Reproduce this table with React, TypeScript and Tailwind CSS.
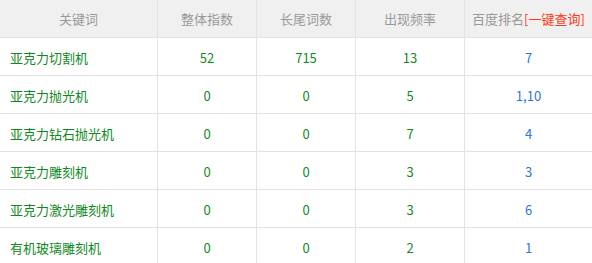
import React from "react";

const rows = [
  ["亚克力切割机", "52", "715", "13", "7"],
  ["亚克力抛光机", "0", "0", "5", "1,10"],
  ["亚克力钻石抛光机", "0", "0", "7", "4"],
  ["亚克力雕刻机", "0", "0", "3", "3"],
  ["亚克力激光雕刻机", "0", "0", "3", "6"],
  ["有机玻璃雕刻机", "0", "0", "2", "1"],
];

const font = { fontFamily: '"Microsoft YaHei", "Noto Sans CJK SC", "Noto Sans", sans-serif' };

export default function App() {
  return (
    <div className="w-[592px] h-[263px] overflow-hidden bg-white text-[13px]" style={font}>
      <div className="grid grid-cols-[158px_99px_99px_109px_127px] h-[38px] bg-[#f0f0f0] border-b border-[#e3e3e3] text-[#999999]">
        <div className="flex items-center justify-center border-r border-[#e3e3e3]">关键词</div>
        <div className="flex items-center justify-center border-r border-[#e3e3e3]">整体指数</div>
        <div className="flex items-center justify-center border-r border-[#e3e3e3]">长尾词数</div>
        <div className="flex items-center justify-center border-r border-[#e3e3e3]">出现频率</div>
        <div className="flex items-center justify-center">
          百度排名<span className="text-[#ff3a1a]">[一键查询]</span>
        </div>
      </div>
      {rows.map((r, i) => (
        <div
          key={i}
          className="grid grid-cols-[158px_99px_99px_109px_127px] h-[38px] border-b border-[#e3e3e3] text-[#108a1e]"
        >
          <div className="flex items-center pl-[10px] pt-[2px] border-r border-[#e3e3e3]">{r[0]}</div>
          <div className="flex items-center justify-center pt-[2px] border-r border-[#e3e3e3]">{r[1]}</div>
          <div className="flex items-center justify-center pt-[2px] border-r border-[#e3e3e3]">{r[2]}</div>
          <div className="flex items-center justify-center pt-[2px] border-r border-[#e3e3e3]">{r[3]}</div>
          <div className="flex items-center justify-center pt-[2px] text-[#2a78e0]">{r[4]}</div>
        </div>
      ))}
    </div>
  );
}
